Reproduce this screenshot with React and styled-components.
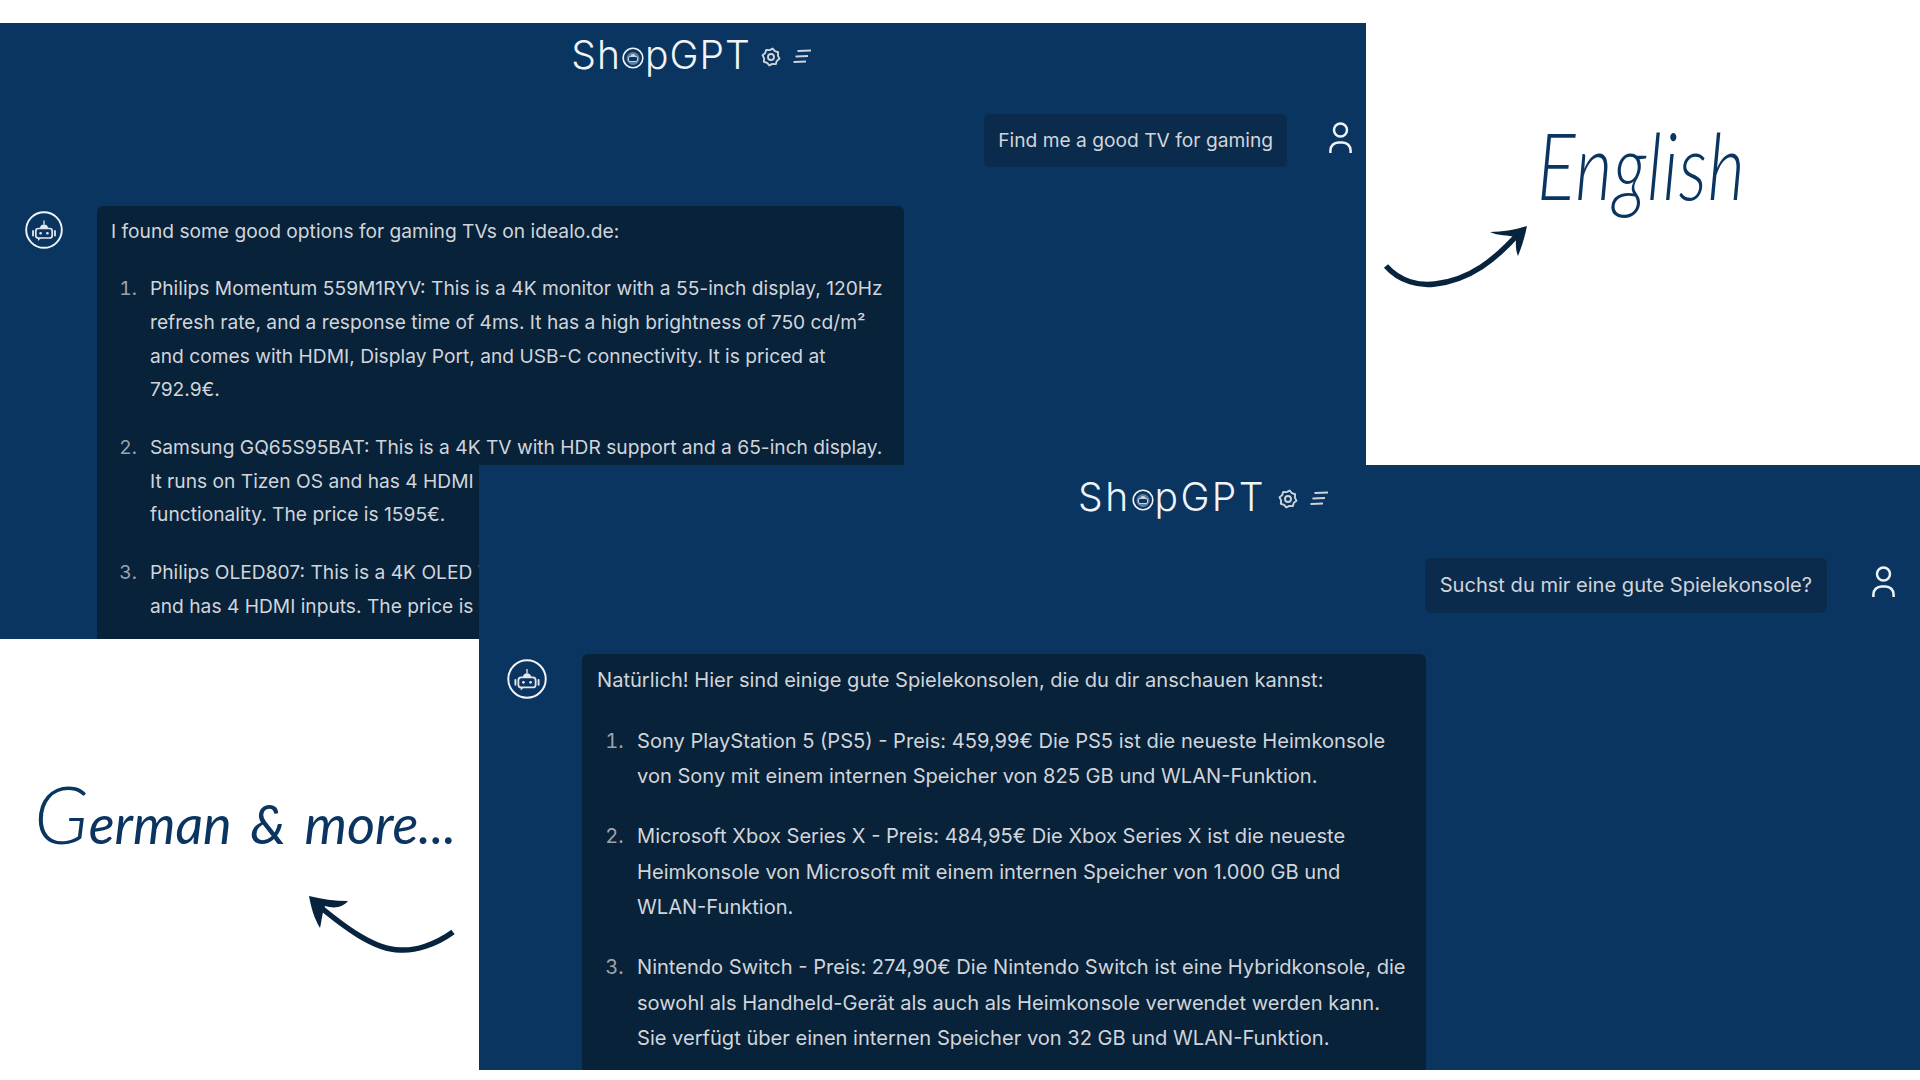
import React from "react";
import styled, { createGlobalStyle } from "styled-components";

const Global = createGlobalStyle`
  html, body { margin: 0; padding: 0; background: #fff; }
  body { font-family: Inter, "Liberation Sans", sans-serif; }
`;

const Canvas = styled.div`
  position: relative;
  width: 1920px;
  height: 1080px;
  overflow: hidden;
  background: #fff;
`;

const Window = styled.section`
  position: absolute;
  left: ${(p) => p.$left}px;
  top: ${(p) => p.$top}px;
  width: ${(p) => p.$width}px;
  height: ${(p) => p.$height}px;
  display: flex;
  flex-direction: column;
  overflow: hidden;
  background: #0a3560;
`;

const Header = styled.header`
  flex: none;
  height: 64px;
  display: flex;
  align-items: center;
  justify-content: center;
  padding-left: ${(p) => p.$shift}px;
  color: #f1f4f7;
`;

const Wordmark = styled.h1`
  margin: 0;
  display: flex;
  align-items: center;
  font-weight: 300;
  font-size: 39px;
  line-height: 64px;
  letter-spacing: ${(p) => p.$tracking}px;
`;

const LogoO = styled.svg`
  width: 22px;
  height: 22px;
  margin: 5px 1px 0 1px;
  flex: none;
`;

const GearIcon = styled.svg`
  width: 20px;
  height: 20px;
  margin-left: ${(p) => p.$gap}px;
  margin-top: 3px;
`;

const MenuIcon = styled.svg`
  width: 19px;
  height: 15px;
  margin-left: 12px;
  margin-top: 3px;
`;

const UserRow = styled.div`
  flex: none;
  display: flex;
  justify-content: flex-end;
  align-items: flex-start;
  gap: ${(p) => p.$gap}px;
  margin-top: ${(p) => p.$top}px;
  padding-right: ${(p) => p.$right}px;
`;

const UserBubble = styled.div`
  height: ${(p) => p.$height}px;
  box-sizing: border-box;
  padding: 0 ${(p) => p.$pad}px 1px;
  display: flex;
  align-items: center;
  border-radius: 6px;
  background: #0a2b4c;
  color: #d1d5db;
  font-size: ${(p) => p.$font}px;
  white-space: nowrap;
`;

const UserIcon = styled.svg`
  width: 23px;
  height: 31px;
  margin-top: 8px;
  flex: none;
`;

const BotRow = styled.div`
  flex: 1;
  min-height: 0;
  display: flex;
  align-items: flex-start;
  gap: ${(p) => p.$gap}px;
  margin-top: ${(p) => p.$top}px;
  padding-left: ${(p) => p.$left}px;
`;

const Avatar = styled.svg`
  flex: none;
  width: ${(p) => p.$size}px;
  height: ${(p) => p.$size}px;
  margin-top: 5px;
`;

const BotBubble = styled.div`
  width: ${(p) => p.$width}px;
  height: 100%;
  box-sizing: border-box;
  padding: ${(p) => p.$padTop}px 16px 0 ${(p) => p.$pad}px;
  overflow: hidden;
  border-radius: 6px 6px 0 0;
  background: #082239;
  color: #d1d5db;
  font-size: ${(p) => p.$font}px;
  line-height: ${(p) => p.$line}px;
`;

const Intro = styled.p`
  margin: 0 0 ${(p) => p.$gap}px;
`;

const List = styled.ol`
  margin: 0;
  padding-left: ${(p) => p.$indent}px;
  li {
    margin-bottom: ${(p) => p.$gap}px;
    padding-left: 8px;
  }
  li::marker {
    color: #9ca3af;
  }
`;

const Note = styled.div`
  position: absolute;
  left: ${(p) => p.$left}px;
  top: ${(p) => p.$top}px;
  color: #0a3560;
  white-space: nowrap;
  transform-origin: left top;
`;

const EnglishNote = styled(Note)`
  font-family: Lato, sans-serif;
  font-style: italic;
  font-weight: 300;
  font-size: 92px;
  line-height: 110px;
  letter-spacing: 1px;
  transform: scaleX(0.78);
`;

const GermanNote = styled(Note)`
  font-family: Lato, sans-serif;
  font-style: italic;
  font-weight: 400;
  font-size: 54px;
  line-height: 70px;
  letter-spacing: 0;
  word-spacing: 6px;
  span { font-size: 80px; font-weight: 300; line-height: 70px; }
`;

const Arrow = styled.svg`
  position: absolute;
  left: ${(p) => p.$left}px;
  top: ${(p) => p.$top}px;
  width: ${(p) => p.$w}px;
  height: ${(p) => p.$h}px;
`;

const gearPoints = Array.from({ length: 16 }, (_, i) => {
  const a = (i * Math.PI) / 8 + Math.PI / 16;
  const r = i % 2 === 0 ? 8.6 : 7;
  return `${(10 + r * Math.cos(a)).toFixed(2)},${(10 + r * Math.sin(a)).toFixed(2)}`;
}).join(" ");

const Gear = ({ gap }) => (
  <GearIcon $gap={gap} viewBox="0 0 20 20" aria-hidden>
    <polygon points={gearPoints} fill="none" stroke="#ccd4dd" strokeWidth="1.9" strokeLinejoin="round" />
    <circle cx="10" cy="10" r="3" fill="none" stroke="#ccd4dd" strokeWidth="1.9" />
  </GearIcon>
);

const Logo = ({ tracking }) => (
  <Wordmark $tracking={tracking}>
    Sh
    <LogoO viewBox="0 0 22 22" aria-hidden>
      <circle cx="11" cy="11" r="9.8" fill="none" stroke="#eef1f5" strokeWidth="1.6" />
      <circle cx="11" cy="11.5" r="6.5" fill="#5f7f9f" />
      <rect x="6.5" y="9.5" width="9" height="5" rx="1.5" fill="#0a3560" stroke="#c9d3de" strokeWidth="1" />
      <path d="M8.5 9.5a2.5 2.5 0 0 1 5 0z" fill="#c9d3de" />
    </LogoO>
    pGPT
  </Wordmark>
);

const Menu = () => (
  <MenuIcon viewBox="0 0 19 15" aria-hidden>
    <g stroke="#ccd4dd" strokeWidth="2" strokeLinecap="square">
      <path d="M5.5 2 L17 1.6" />
      <path d="M3.5 7.5 L14 7.1" />
      <path d="M1.5 13 L12 12.6" />
    </g>
  </MenuIcon>
);

const Robot = ({ size }) => (
  <Avatar $size={size} viewBox="0 0 38 38" aria-hidden>
    <circle cx="19" cy="19" r="17.8" fill="none" stroke="#f2f4f7" strokeWidth="1.9" />
    <path d="M19 9.5v4" stroke="#e4e8ee" strokeWidth="1.3" />
    <path d="M15 17.5a4 4 0 0 1 8 0z" fill="#e4e8ee" />
    <rect x="10.8" y="17.5" width="16.4" height="9.5" rx="2.6" fill="#0a3560" stroke="#e4e8ee" strokeWidth="1.7" />
    <circle cx="15.6" cy="22.2" r="1.3" fill="#e4e8ee" />
    <circle cx="22.4" cy="22.2" r="1.3" fill="#e4e8ee" />
    <path d="M8 20v4.5M30 20v4.5" stroke="#e4e8ee" strokeWidth="1.8" strokeLinecap="round" />
    <path d="M13 27v3l3-3z" fill="#e4e8ee" />
  </Avatar>
);

const Person = () => (
  <UserIcon viewBox="0 0 23 31" aria-hidden>
    <circle cx="11.5" cy="8" r="6.5" fill="none" stroke="#f0f3f6" strokeWidth="2.5" />
    <path d="M1.4 31v-2.6a8 8 0 0 1 8-8h4.2a8 8 0 0 1 8 8V31" fill="none" stroke="#f0f3f6" strokeWidth="2.5" />
  </UserIcon>
);

const Chat = ({ cfg, question, intro, items }) => (
  <Window $left={cfg.left} $top={cfg.top} $width={cfg.width} $height={cfg.height}>
    <Header $shift={cfg.shift}>
      <Logo tracking={cfg.tracking} />
      <Gear gap={cfg.gearGap} />
      <Menu />
    </Header>
    <UserRow $gap={cfg.userGap} $top={cfg.userTop} $right={cfg.userRight}>
      <UserBubble $height={cfg.userH} $pad={cfg.pad} $font={cfg.font}>{question}</UserBubble>
      <Person />
    </UserRow>
    <BotRow $gap={cfg.botGap} $top={cfg.botTop} $left={cfg.botLeft}>
      <Robot size={cfg.avatar} />
      <BotBubble $width={cfg.botW} $pad={cfg.pad} $padTop={cfg.padTop} $font={cfg.font} $line={cfg.line}>
        <Intro $gap={cfg.para}>{intro}</Intro>
        <List $indent={cfg.indent} $gap={cfg.para}>
          {items.map((t) => <li key={t}>{t}</li>)}
        </List>
      </BotBubble>
    </BotRow>
  </Window>
);

const en = {
  left: 0, top: 23, width: 1366, height: 616, shift: 17, tracking: 1, gearGap: 10,
  userTop: 27, userH: 53, userGap: 42, userRight: 14, pad: 14, padTop: 8.5, font: 19.2, line: 33.7,
  botTop: 39, botLeft: 25, botGap: 34, botW: 807, avatar: 38, indent: 31, para: 24,
};

const de = {
  left: 479, top: 465, width: 1441, height: 605, shift: 8, tracking: 2.4, gearGap: 12,
  userTop: 29, userH: 55, userGap: 45, userRight: 25, pad: 15, padTop: 9, font: 20.08, line: 35.2,
  botTop: 41, botLeft: 28, botGap: 35, botW: 844, avatar: 40, indent: 32, para: 25.4,
};

export default function App() {
  return (
    <Canvas>
      <Global />
      <Chat
        cfg={en}
        question="Find me a good TV for gaming"
        intro="I found some good options for gaming TVs on idealo.de:"
        items={[
          "Philips Momentum 559M1RYV: This is a 4K monitor with a 55-inch display, 120Hz refresh rate, and a response time of 4ms. It has a high brightness of 750 cd/m² and comes with HDMI, Display Port, and USB-C connectivity. It is priced at 792.9€.",
          "Samsung GQ65S95BAT: This is a 4K TV with HDR support and a 65-inch display. It runs on Tizen OS and has 4 HDMI inputs, along with Smart TV and gaming functionality. The price is 1595€.",
          "Philips OLED807: This is a 4K OLED TV with a 55-inch display, a fast 120Hz panel and has 4 HDMI inputs. The price is 1199€.",
        ]}
      />
      <Chat
        cfg={de}
        question="Suchst du mir eine gute Spielekonsole?"
        intro="Natürlich! Hier sind einige gute Spielekonsolen, die du dir anschauen kannst:"
        items={[
          "Sony PlayStation 5 (PS5) - Preis: 459,99€ Die PS5 ist die neueste Heimkonsole von Sony mit einem internen Speicher von 825 GB und WLAN-Funktion.",
          "Microsoft Xbox Series X - Preis: 484,95€ Die Xbox Series X ist die neueste Heimkonsole von Microsoft mit einem internen Speicher von 1.000 GB und WLAN-Funktion.",
          "Nintendo Switch - Preis: 274,90€ Die Nintendo Switch ist eine Hybridkonsole, die sowohl als Handheld-Gerät als auch als Heimkonsole verwendet werden kann. Sie verfügt über einen internen Speicher von 32 GB und WLAN-Funktion.",
        ]}
      />
      <EnglishNote $left={1537} $top={110}>English</EnglishNote>
      <Arrow $left={1380} $top={220} $w={160} $h={72} viewBox="1380 220 160 72" aria-hidden>
        <path d="M1386 266 C1400 282 1420 286 1435 284 C1470 280 1495 260 1520 232" fill="none" stroke="#08233d" strokeWidth="5.5" />
        <path d="M1527 226 C1525 236 1522 246 1518 256 C1515 249 1516 242 1516 237 C1508 235 1498 236 1490 232 C1503 232 1515 230 1527 226 Z" fill="#08233d" />
      </Arrow>
      <GermanNote $left={34} $top={778}><span>G</span>erman &amp; more...</GermanNote>
      <Arrow $left={300} $top={890} $w={160} $h={70} viewBox="300 890 160 70" aria-hidden>
        <path d="M453 932 C435 945 415 951 400 950 C375 950 345 928 313 901" fill="none" stroke="#08233d" strokeWidth="5.5" />
        <path d="M309 896 C321 899 335 901 348 901 C343 907 335 909 325 906 C322 913 322 920 320 928 C314 918 311 907 309 896 Z" fill="#08233d" />
      </Arrow>
    </Canvas>
  );
}
